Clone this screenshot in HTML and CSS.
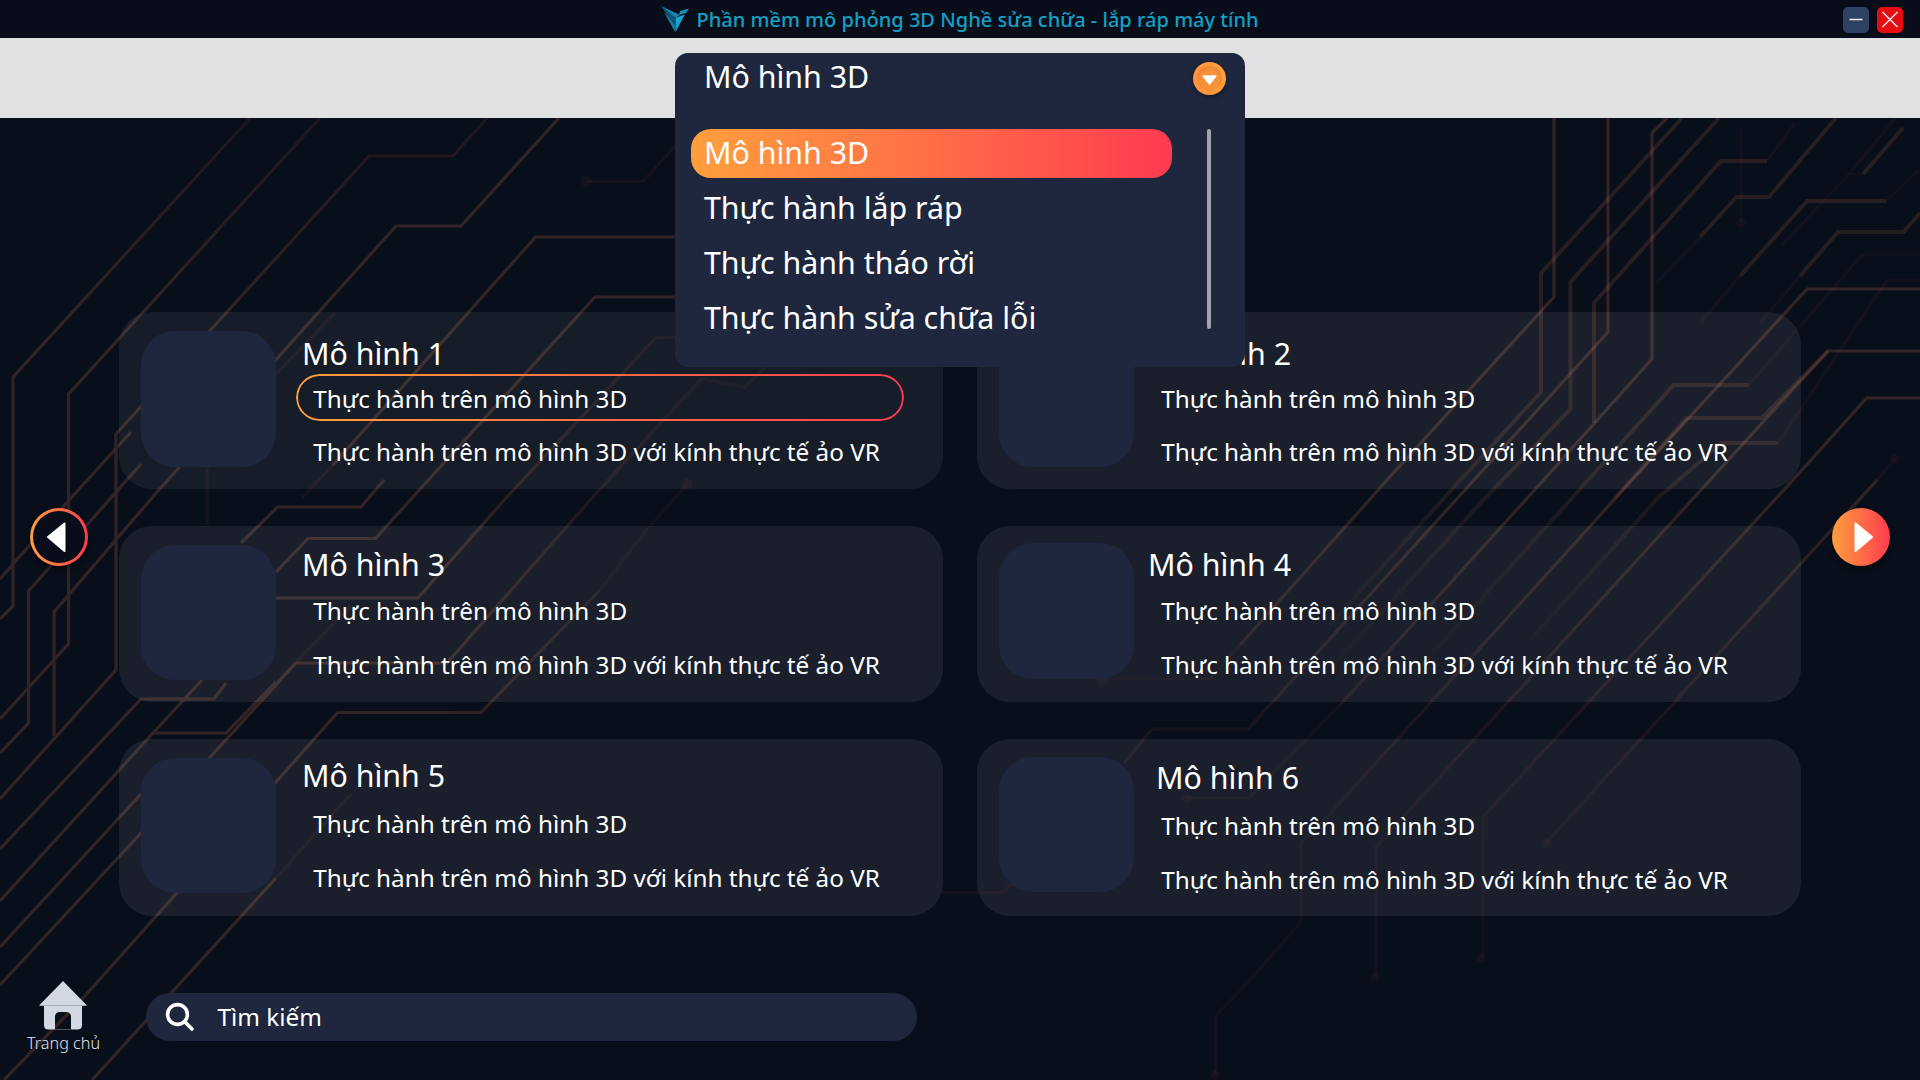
FILE: index.html
```html
<!DOCTYPE html>
<html lang="vi">
<head>
<meta charset="utf-8">
<title>Phần mềm mô phỏng 3D</title>
<link rel="stylesheet" href="styles.css">
</head>
<body>
<svg class="circuit" viewBox="0 0 1920 1080" aria-hidden="true">
  <defs>
    <linearGradient id="fadeDown" gradientUnits="userSpaceOnUse" x1="0" y1="480" x2="0" y2="840">
      <stop offset="0" stop-color="#f28a5c"/>
      <stop offset="1" stop-color="#c8415a" stop-opacity=".3"/>
    </linearGradient>
    <linearGradient id="fadeUp" gradientUnits="userSpaceOnUse" x1="0" y1="118" x2="0" y2="330">
      <stop offset="0" stop-color="#d0584f" stop-opacity=".6"/>
      <stop offset="1" stop-color="#f28a5c"/>
    </linearGradient>
    <linearGradient id="fadeRight" gradientUnits="userSpaceOnUse" x1="440" y1="0" x2="690" y2="0">
      <stop offset="0" stop-color="#f28a5c"/>
      <stop offset="1" stop-color="#d0584f" stop-opacity=".35"/>
    </linearGradient>
    <linearGradient id="fadeFoot" gradientUnits="userSpaceOnUse" x1="0" y1="440" x2="0" y2="690">
      <stop offset="0" stop-color="#f28a5c"/>
      <stop offset="1" stop-color="#d0584f" stop-opacity="0"/>
    </linearGradient>
  </defs>
  <g class="trace">
    <path stroke="url(#fadeUp)" d="M250 118L13 377V606L0 619M320 118L68.500 394V644L0 719M487 118L453 156H369L116 434V670L0 799"/>
    <path d="M559 118L461 226H396L157 492L54 612V736M141 464L28.500 591V723L0 753M131 432L71 498L0 579"/>
    <path d="M675 237H535.500L333 465M675 297H595L412 498L375.500 538.500H308L276 572"/>
    <path stroke="url(#fadeRight)" d="M675 337.500H656L506 498L418 598H276M765 367L745 387L701 379L592 498L447 663H296"/>
    <path d="M296 663L141 833L0 985M338 712L276 782L84 997L4 1080"/>
    <path stroke="url(#fadeRight)" d="M600 590L481 712.500H338"/>
    <path d="M384 480L361 507H277.500L241 543M226 683L214 699H141L0 849M276 682L226 733H153L0 901M202 680L153 733M141 794L0 947M276 878L92 1080"/>
  </g>
  <g class="trace dim">
    <path d="M586 181.500H643L676 145M207 467V525M351 794L276 878M335 313L276 374M333 465L302 498M276 682L351 606"/>
  </g>
  <g class="trace faint">
    <path d="M687 484L644 533L600 590"/>
  </g>
  <g class="trace">
    <path stroke="url(#fadeDown)" d="M1554 118V297L1387 480L1240 645M1608 118V332L1474 480L1248 729H1152L1124 763M1667 118L1652 133V359L1543.500 480L1340 705M1920 289H1807L1632 480L1327 817L1301 843V922L1240 991M1920 351H1828L1710 480L1376 847V977M1920 398H1866.600L1793 480L1483 817V958M1877 480L1546 843"/>
  </g>
  <g class="trace mid">
    <path stroke="url(#fadeFoot)" d="M1682 118L1541 273V392L1444 498L1330 625M1719 118L1570.500 282V409L1485 498L1320 680M1749 385H1673.600L1572 498L1400 690M1828 351L1762 418H1686.700L1615 498M1778 443H1721L1658 498L1530 640"/>
    <path d="M1767 161L1721 161L1594 303V423M1836 118L1769 197H1736.500L1700 237M1886 201H1807L1740 276M1920 213L1903.500 232H1838L1800 276M1903 128L1863 174"/>
  </g>
  <g class="trace faint">
    <path d="M1700 237L1656 283M1740 276L1700 323M1800 276L1760 323M1895 118L1849 174L1782 245M1795 123L1767 161M1919 170L1886 201M1741 127V223M1863 174H1849M1920 255H1862L1749 385M1920 280H1887L1778 443M1895 459L1877 480M1340 705L1249 798H1187M1240 645L1210 679H1101M942 892.500H1003L1012 883M1240 991L1215.500 1016V1075"/>
  </g>
  <g class="node">
    <circle cx="586" cy="181" r="6"/><circle cx="687" cy="484" r="6"/><circle cx="1101" cy="680" r="5"/><circle cx="1187" cy="799" r="5"/><circle cx="1375" cy="978" r="5"/><circle cx="1481" cy="958" r="5"/><circle cx="1546" cy="843" r="5"/><circle cx="1895" cy="459" r="5"/><circle cx="1741" cy="223" r="5"/><circle cx="1215" cy="1075" r="5"/>
  </g>
</svg>

<header class="titlebar">
  <div class="brand">
    <svg class="logo" viewBox="0 0 28 27">
      <path fill="#0d5478" d="M0 0L16 11L14 19L7 10Z"/>
      <path fill="#127da3" d="M3 6L7 10L14 19V26Z"/>
      <path fill="#1787ad" d="M0 0L19 9L15 11.500Z"/>
      <path fill="#1aa3cb" d="M15 11.500L24 8.500L14.500 26V19Z"/>
      <path fill="#1491b8" d="M19 5L28 2.500L25 7L18 9Z"/>
    </svg>
    <h1>Phần mềm mô phỏng 3D Nghề sửa chữa - lắp ráp máy tính</h1>
  </div>
  <div class="window-buttons">
    <button class="win min" aria-label="Thu nhỏ"><svg viewBox="0 0 26 26"><path d="M6.500 12.500H19.500"/></svg></button>
    <button class="win close" aria-label="Đóng"><svg viewBox="0 0 26 26"><path d="M5.500 5L20.500 20M20.500 5L5.500 20"/></svg></button>
  </div>
</header>

<div class="band">
  <section class="dropdown">
    <div class="dropdown-head">
      <span>Mô hình 3D</span>
      <button class="toggle" aria-label="Mở danh mục"><svg viewBox="0 0 34 34"><path d="M11 14.500H23L17 22Z"/></svg></button>
    </div>
    <div class="dropdown-body">
      <ul class="options">
        <li class="selected">Mô hình 3D</li>
        <li>Thực hành lắp ráp</li>
        <li>Thực hành tháo rời</li>
        <li>Thực hành sửa chữa lỗi</li>
      </ul>
      <div class="scrollbar"></div>
    </div>
  </section>
</div>

<main class="stage">
  <button class="nav prev" aria-label="Trang trước"><svg viewBox="0 0 58 58"><path d="M18 29L34.500 15.500V43Z"/></svg></button>
  <div class="cards">
    <article class="card c1"><div class="thumb"></div><div class="info"><h2>Mô hình 1</h2><p class="active">Thực hành trên mô hình 3D</p><p>Thực hành trên mô hình 3D với kính thực tế ảo VR</p></div></article>
    <article class="card right c2"><div class="thumb"></div><div class="info"><h2>Mô hình 2</h2><p>Thực hành trên mô hình 3D</p><p>Thực hành trên mô hình 3D với kính thực tế ảo VR</p></div></article>
    <article class="card c3"><div class="thumb"></div><div class="info"><h2>Mô hình 3</h2><p>Thực hành trên mô hình 3D</p><p>Thực hành trên mô hình 3D với kính thực tế ảo VR</p></div></article>
    <article class="card right c4"><div class="thumb"></div><div class="info"><h2>Mô hình 4</h2><p>Thực hành trên mô hình 3D</p><p>Thực hành trên mô hình 3D với kính thực tế ảo VR</p></div></article>
    <article class="card c5"><div class="thumb"></div><div class="info"><h2>Mô hình 5</h2><p>Thực hành trên mô hình 3D</p><p>Thực hành trên mô hình 3D với kính thực tế ảo VR</p></div></article>
    <article class="card right c6"><div class="thumb"></div><div class="info"><h2>Mô hình 6</h2><p>Thực hành trên mô hình 3D</p><p>Thực hành trên mô hình 3D với kính thực tế ảo VR</p></div></article>
  </div>
  <button class="nav next" aria-label="Trang sau"><svg viewBox="0 0 58 58"><path d="M40 29L23.500 15.500V43Z"/></svg></button>
</main>

<footer class="bottom">
  <a class="home">
    <svg viewBox="0 0 48 49">
      <path class="wall" d="M5 24.500H43V44Q43 48.500 38.500 48.500H32V36Q32 31 27 31H21Q16 31 16 36V48.500H9.500Q5 48.500 5 44Z"/>
      <path class="roof" d="M24 0L48 24.500H0Z"/>
      <path class="eave" d="M1 24.500H47"/>
      <path class="sill" d="M15 48.500H33"/>
    </svg>
    <span>Trang chủ</span>
  </a>
  <div class="search">
    <svg viewBox="0 0 30 30"><circle cx="12.500" cy="12.500" r="9.900"/><path d="M19.500 19.500L27 27"/></svg>
    <span>Tìm kiếm</span>
  </div>
</footer>
</body>
</html>
```
FILE: styles.css
```css
* { box-sizing: border-box; margin: 0; padding: 0; }

body {
  width: 1920px;
  height: 1080px;
  overflow: hidden;
  position: relative;
  background: #080e1a;
  color: #fff;
  font-family: "Noto Sans", sans-serif;
  display: flex;
  flex-direction: column;
}

button { border: 0; background: none; display: block; }
svg { display: block; }

/* background circuit artwork */
.circuit { position: absolute; inset: 0; width: 1920px; height: 1080px; z-index: -1; }
.trace { fill: none; stroke: #f28a5c; stroke-width: 3.200; opacity: .18; }
.trace.mid { stroke-width: 4; opacity: .13; }
.trace.dim { stroke: #d0584f; opacity: .08; }
.trace.faint { stroke: #d0485a; opacity: .05; }
.node { fill: #d0485a; opacity: .05; }

.titlebar {
  height: 38px;
  flex: none;
  display: grid;
  grid-template-columns: 1fr auto 1fr;
  background: #080d19;
}
.brand { grid-column: 2; display: flex; align-items: flex-start; gap: 7px; padding: 6px 0 0; }
.logo { width: 28px; height: 27px; }
.brand h1 { font-size: 20.050px; font-weight: 500; line-height: 28px; color: #12a0c6; white-space: nowrap; }
.window-buttons { display: flex; justify-content: flex-end; gap: 8px; padding: 6.500px 17px 0 0; }
.win { width: 26px; height: 26px; border-radius: 5px; }
.win path { fill: none; stroke: #f4e9ea; stroke-width: 1.500; }
.min { background: #2e4262; }
.close { background: #e60c12; }

.band { height: 80px; flex: none; background: #e0e1e3; display: flex; justify-content: center; }

.dropdown {
  position: absolute;
  top: 52.500px;
  left: 675px;
  width: 569.500px;
  height: 314px;
  border-radius: 13px;
  background: #1e273d;
  z-index: 2;
}
.dropdown-head {
  height: 76.500px;
  padding: 4.500px 18.500px 0 29px;
  display: flex;
  justify-content: space-between;
  font-size: 30.350px;
  line-height: 40px;
}
.toggle {
  width: 33px;
  height: 33px;
  margin-top: 4.500px;
  border-radius: 50%;
  background: linear-gradient(90deg, #ff9340, #ffa03a);
  box-shadow: 0 2px 5px rgba(0, 0, 0, .35);
}
.toggle svg {
  width: 33px;
  height: 33px;
  border: 4px solid transparent;
  border-radius: 50%;
  background: radial-gradient(circle at 50% 58%, rgba(225, 125, 45, .25) 45%, rgba(205, 105, 35, .6)) padding-box;
}
.toggle path { fill: #fff; stroke: #fff; stroke-width: 2; stroke-linejoin: round; transform: scale(1.350) translate(-4.400px, -4.200px); }
.dropdown-body { display: flex; justify-content: space-between; padding: 0 33.500px 0 15.500px; }
.options { width: 481px; list-style: none; font-size: 30.350px; display: flex; flex-direction: column; gap: 6.500px; }
.options li { height: 48.500px; line-height: 47.500px; padding-left: 13.500px; }
.selected { border-radius: 20px; background: linear-gradient(90deg, #ff9f3d, #ff3b50); }
.scrollbar { width: 4.500px; height: 200px; border-radius: 2px; background: #a2a5b0; }

.stage {
  flex: none;
  height: 874.500px;
  padding: 194px 30px 0;
  display: flex;
  align-items: flex-start;
  gap: 31px;
}
.nav { width: 58px; height: 58px; margin-top: 195.500px; border-radius: 50%; flex: none; box-shadow: 0 4px 6px rgba(0, 0, 0, .4); }
.nav path { fill: #fff; stroke: #fff; stroke-width: 2; stroke-linejoin: round; }
.prev {
  border: 3px solid transparent;
  background: linear-gradient(#080d19, #080d19) padding-box, linear-gradient(90deg, #ff9f3d, #ff3b50) border-box;
}
.prev svg { margin: -3px; width: 58px; height: 58px; }
.next { background: linear-gradient(90deg, #ff9f3d, #ff3b50); }

.cards {
  display: grid;
  grid-template-columns: 824px 824px;
  grid-auto-rows: 176.500px;
  column-gap: 34px;
  row-gap: 37px;
}
.card {
  --thumb-top: 19px;
  --title-top: 22px;
  --title-left: 26px;
  --lines-left: 20px;
  --lines-gap: 0px;
  --line-space: 6px;
  display: flex;
  padding-left: 21.500px;
  border-radius: 33px;
  background: rgba(255, 255, 255, .075);
}
.thumb { width: 135.500px; height: 135.500px; margin-top: var(--thumb-top); flex: none; border-radius: 34px; background: #1e273d; }
.info { padding-top: var(--title-top); }
.info h2 { margin: 0 0 var(--lines-gap) var(--title-left); font-size: 30.350px; font-weight: 400; line-height: 40px; }
.info p {
  width: 608px;
  height: 47px;
  margin: 0 0 var(--line-space) var(--lines-left);
  padding-left: 15.300px;
  border: 2px solid transparent;
  border-radius: 24px;
  font-size: 24.280px;
  line-height: 45px;
  white-space: nowrap;
}
.info p.active { position: relative; }
.info p.active::before {
  content: "";
  position: absolute;
  inset: -2px;
  padding: 2px;
  border-radius: 24px;
  background: linear-gradient(90deg, #ff9f3d, #ff3b50);
  mask: linear-gradient(#000 0 0) content-box exclude, linear-gradient(#000 0 0);
}
.right { --thumb-top: 17.500px; --title-left: 14px; --lines-left: 10px; }
.c1 { background: rgba(255, 255, 255, .062); }
.c2 { --thumb-top: 19px; }
.c3, .c4 { --title-top: 19.500px; --lines-gap: .5px; --line-space: 7px; }
.c5 { --thumb-top: 18.500px; --title-top: 16.500px; --lines-gap: 3.500px; --line-space: 7px; }
.c6 { --title-top: 18.500px; --title-left: 22px; --lines-gap: 3.500px; --line-space: 7px; }

.bottom { display: flex; align-items: flex-start; padding-left: 27px; }
.home { width: 72px; margin-top: -12px; display: flex; flex-direction: column; align-items: center; }
.home svg { width: 48px; height: 49px; }
.home path { fill: #d3d8e3; }
.home .eave { stroke: #a4abba; stroke-width: 1; }
.home .sill { stroke: #4a5160; stroke-width: 1; }
.home span { margin-top: 2px; padding-left: 1px; font-size: 16.200px; font-weight: 300; line-height: 22px; color: #e2e5ec; white-space: nowrap; }
.search {
  width: 771px;
  height: 48.500px;
  margin-left: 47px;
  padding-left: 19px;
  border-radius: 25px;
  background: #1e273d;
  display: flex;
  align-items: center;
  gap: 22.500px;
  font-size: 24.280px;
  line-height: 46px;
}
.search svg { width: 30px; height: 30px; fill: none; stroke: #fff; stroke-width: 3.600; stroke-linecap: round; }
```
